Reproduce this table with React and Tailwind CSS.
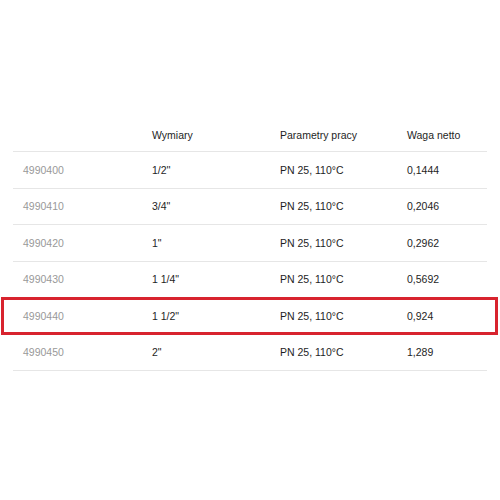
const rows = [
  { code: "4990400", size: "1/2''", params: "PN 25, 110°C", weight: "0,1444" },
  { code: "4990410", size: "3/4\"", params: "PN 25, 110°C", weight: "0,2046" },
  { code: "4990420", size: "1\"", params: "PN 25, 110°C", weight: "0,2962" },
  { code: "4990430", size: "1 1/4\"", params: "PN 25, 110°C", weight: "0,5692" },
  { code: "4990440", size: "1 1/2\"", params: "PN 25, 110°C", weight: "0,924", active: true },
  { code: "4990450", size: "2\"", params: "PN 25, 110°C", weight: "1,289" },
];

export default function App() {
  return (
    <div className="w-[500px] h-[500px] bg-white pt-[118px] px-[13px] font-['Liberation_Sans',Arial,sans-serif] text-[10.5px] text-[#1e1e1e]">
      {/* Header */}
      <div className="grid grid-cols-[129px_128px_127px_1fr] h-[34px] items-center pt-[3px] border-b border-[#e6e6e6]">
        <div />
        <div className="pl-[10px]">Wymiary</div>
        <div className="pl-[10px]">Parametry pracy</div>
        <div className="pl-[10px]">Waga netto</div>
      </div>

      {/* Rows */}
      {rows.map((r) => (
        <div
          key={r.code}
          className="relative grid grid-cols-[129px_128px_127px_1fr] h-[36.5px] items-center pt-[2px] border-b border-[#e6e6e6]"
        >
          <div className="pl-[10px] text-[#999]">{r.code}</div>
          <div className="pl-[10px]">{r.size}</div>
          <div className="pl-[10px]">{r.params}</div>
          <div className="pl-[10px]">{r.weight}</div>
          {r.active && (
            <div className="absolute left-[-12px] right-[-11px] top-[-1px] bottom-[-1px] border-[3px] border-[#d8232e]" />
          )}
        </div>
      ))}
    </div>
  );
}
